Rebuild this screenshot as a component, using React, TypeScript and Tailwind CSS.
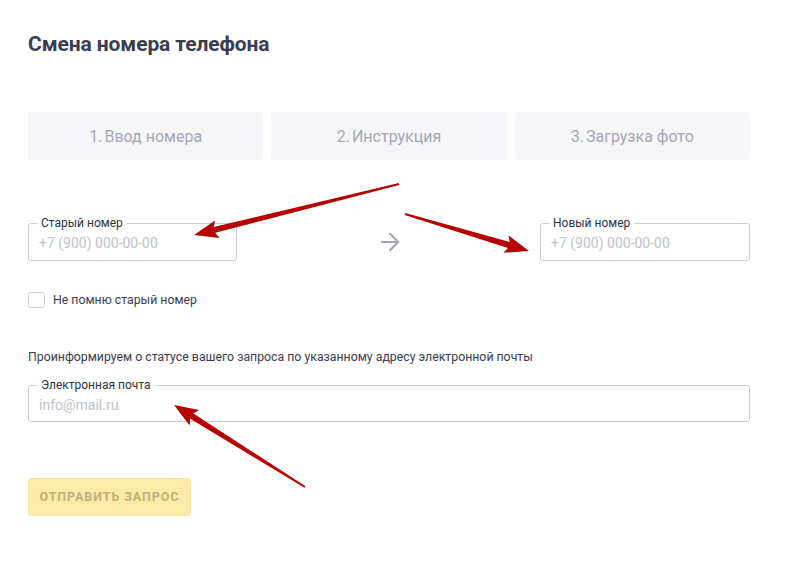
import React from 'react';
import { ArrowRight } from 'lucide-react';

const steps = ['1.\u202FВвод номера', '2.\u202FИнструкция', '3.\u202FЗагрузка фото'];

type Pt = [number, number];

// tapered annotation arrow: thin tail, wide shaft near the head, triangular head
const arrowPoints = (tail: Pt, tip: Pt) => {
  const dx = tip[0] - tail[0];
  const dy = tip[1] - tail[1];
  const len = Math.hypot(dx, dy);
  const ux = dx / len;
  const uy = dy / len;
  const nx = -uy;
  const ny = ux;
  const headLen = 21;
  const headW = 9;
  const shaftW = 3;
  const tailW = 1;
  const bx = tip[0] - ux * headLen;
  const by = tip[1] - uy * headLen;
  const pts: Pt[] = [
    [tail[0] + nx * tailW, tail[1] + ny * tailW],
    [bx + nx * shaftW, by + ny * shaftW],
    [bx + nx * headW - ux * 3, by + ny * headW - uy * 3],
    tip,
    [bx - nx * headW - ux * 3, by - ny * headW - uy * 3],
    [bx - nx * shaftW, by - ny * shaftW],
    [tail[0] - nx * tailW, tail[1] - ny * tailW],
  ];
  return pts.map(p => `${p[0].toFixed(1)},${p[1].toFixed(1)}`).join(' ');
};

const Field: React.FC<{ label: string; placeholder: string; className?: string }> = ({ label, placeholder, className }) => (
  <div className={`relative border border-[#c9cad6] rounded-[3px] ${className ?? ''}`}>
    <span className="absolute left-[8px] -top-[9px] bg-white px-[4px] text-[12px] leading-[16px] text-[#2e3144]">
      {label}
    </span>
    <input
      placeholder={placeholder}
      className="w-full h-full bg-transparent pl-[10px] pr-2 pt-[2px] text-[14px] text-[#3a3d50] placeholder-[#bfc0ca] outline-none"
    />
  </div>
);

export default function App() {
  return (
    <div className="relative w-[800px] h-[561px] bg-white overflow-hidden font-['Roboto',sans-serif]">
      <div className="pl-[28px] pr-[50px] pt-[29px]">
        <h1 className="text-[21px] leading-[30px] font-bold text-[#3a3d50] tracking-[-0.1px]">Смена номера телефона</h1>

        {/* steps */}
        <div className="mt-[53px] grid grid-cols-3 gap-[8px]">
          {steps.map(s => (
            <div key={s} className="h-[48px] rounded-[4px] bg-[#f6f6fa] flex items-center justify-center pt-[1px] text-[16px] text-[#a4a6b6]">
              {s}
            </div>
          ))}
        </div>

        {/* phone numbers */}
        <div className="mt-[63px] flex items-center justify-between">
          <Field label="Старый номер" placeholder="+7 (900) 000-00-00" className="w-[209px] h-[38px]" />
          <ArrowRight className="w-[28px] h-[28px] text-[#a3a5b5] -mr-[2px]" strokeWidth={1.8} />
          <Field label="Новый номер" placeholder="+7 (900) 000-00-00" className="w-[210px] h-[38px]" />
        </div>

        {/* checkbox */}
        <label className="mt-[30px] flex items-center gap-[8px]">
          <span className="w-[17px] h-[16px] border border-[#c9cad6] rounded-[3px] bg-white" />
          <span className="text-[12.3px] text-[#3a3d50]">Не помню старый номер</span>
        </label>

        <p className="mt-[39px] text-[12.3px] leading-[18px] text-[#3a3d50]">
          Проинформируем о статусе вашего запроса по указанному адресу электронной почты
        </p>

        <Field label="Электронная почта" placeholder="info@mail.ru" className="mt-[19px] w-full h-[37px]" />

        <button className="mt-[56px] w-[163px] h-[38px] rounded-[4px] bg-[#fdeaa8] border border-[#fce39a] text-[12.5px] font-bold uppercase tracking-[0.9px] text-[#c2ae76]">
          Отправить запрос
        </button>
      </div>

      {/* red annotation arrows */}
      <svg className="absolute inset-0 pointer-events-none" width="800" height="561">
        <polygon points={arrowPoints([399, 184], [194, 235])} fill="#b60000" />
        <polygon points={arrowPoints([405, 214], [529, 251])} fill="#b60000" />
        <polygon points={arrowPoints([305, 487], [174, 405])} fill="#b60000" />
      </svg>
    </div>
  );
}
